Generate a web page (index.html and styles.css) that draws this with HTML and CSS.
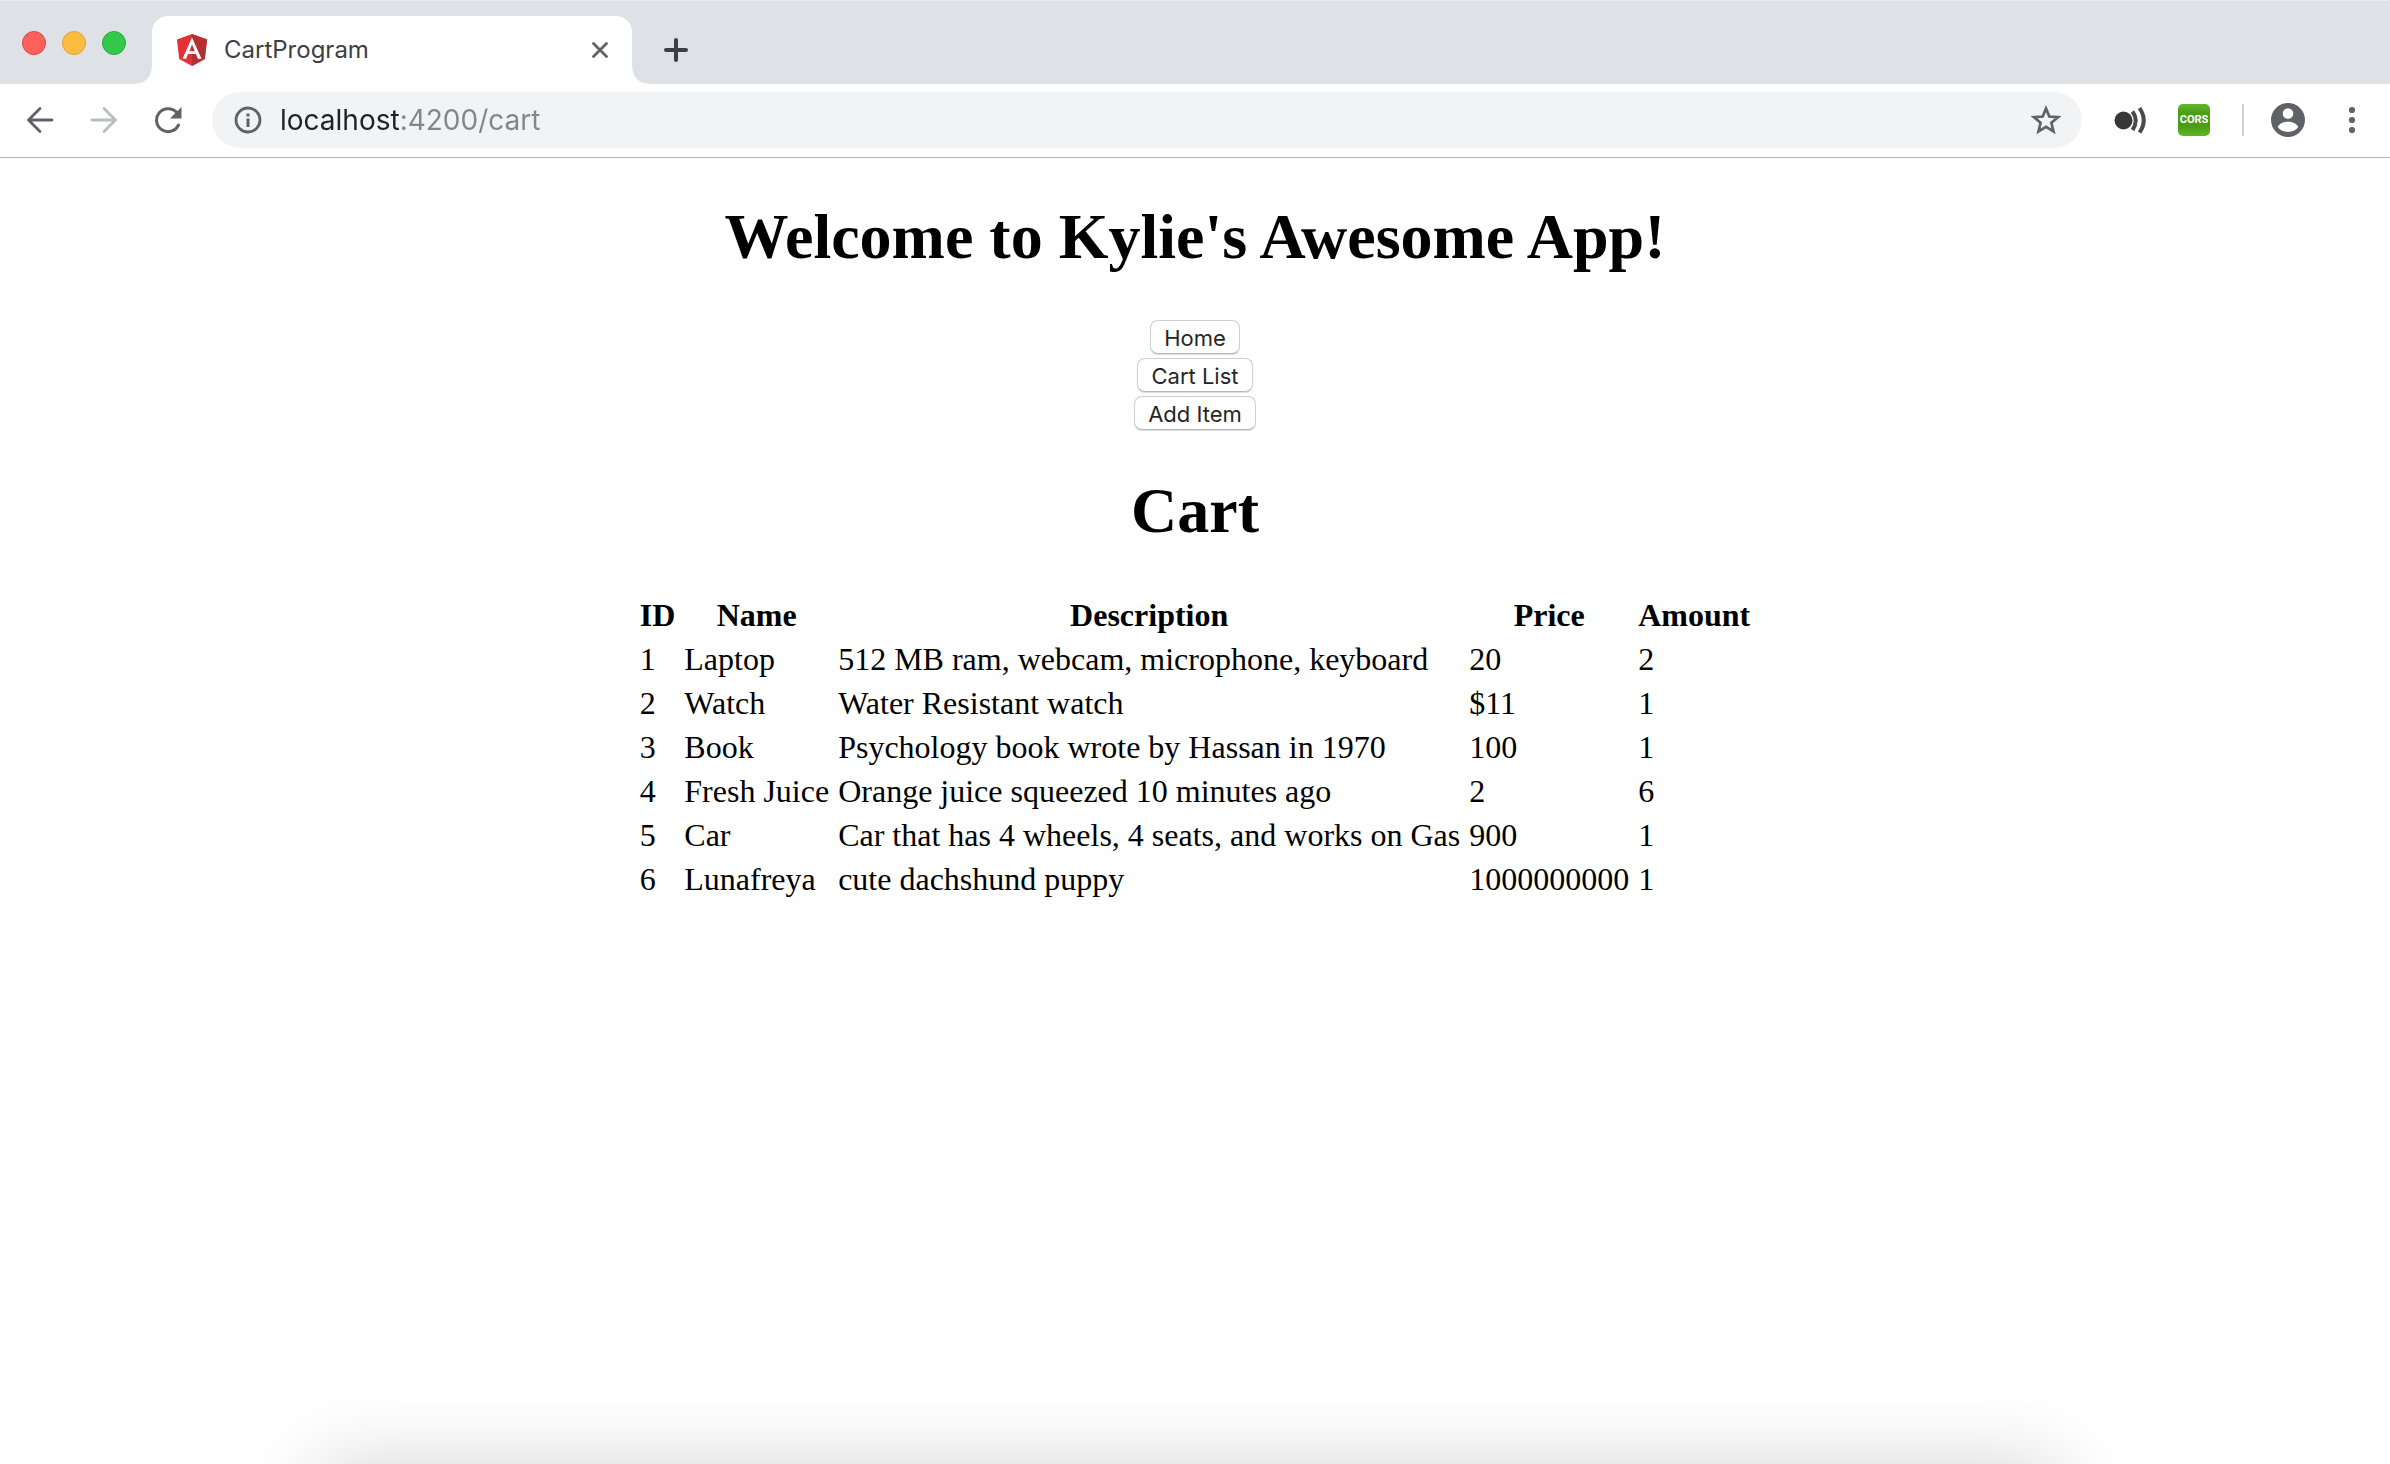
FILE: index.html
```html
<!DOCTYPE html>
<html lang="en">
<head>
<meta charset="utf-8">
<title>CartProgram</title>
<link rel="stylesheet" href="styles.css">
</head>
<body>
<div class="window">
  <header class="chrome">
    <div class="tab-strip">
      <div class="lights">
        <button class="light light-close" type="button" aria-label="Close window"></button>
        <button class="light light-min" type="button" aria-label="Minimize window"></button>
        <button class="light light-max" type="button" aria-label="Zoom window"></button>
      </div>
      <div class="tab">
        <svg class="favicon" width="32" height="32" viewBox="0 0 250 250" aria-hidden="true">
          <path fill="#e23237" d="M125 0 7 42l18 154 100 54 100-54 18-154z"/>
          <path fill="#b52e31" d="M125 0v250l100-54 18-154z"/>
          <path fill="#fff" d="M125 28 51 194h28l15-37h62l15 37h28zm22 106h-43l21-52z"/>
        </svg>
        <span class="tab-title">CartProgram</span>
        <button class="icon-button tab-close" type="button" aria-label="Close tab">
          <svg width="16" height="16" viewBox="0 0 16 16"><path d="M1.500 1.500 14.500 14.500M14.500 1.500 1.500 14.500" fill="none" stroke="#5f6368" stroke-width="2.800" stroke-linecap="round"/></svg>
        </button>
      </div>
      <button class="icon-button new-tab" type="button" aria-label="New tab">
        <svg width="24" height="24" viewBox="0 0 24 24"><path d="M12 2v20M2 12h20" fill="none" stroke="#3c4043" stroke-width="4" stroke-linecap="round"/></svg>
      </button>
    </div>
    <div class="toolbar">
      <nav class="tool-group" aria-label="History">
        <button class="icon-button" type="button" aria-label="Back">
          <svg width="28" height="28" viewBox="0 0 28 28"><path d="M26 14H3M14 2.500 2.500 14 14 25.500" fill="none" stroke="#5f6368" stroke-width="2.800" stroke-linecap="round" stroke-linejoin="round"/></svg>
        </button>
        <button class="icon-button" type="button" aria-label="Forward" disabled>
          <svg width="28" height="28" viewBox="0 0 28 28"><path d="M2 14h23M14 2.500 25.500 14 14 25.500" fill="none" stroke="#babcbe" stroke-width="2.800" stroke-linecap="round" stroke-linejoin="round"/></svg>
        </button>
        <button class="icon-button" type="button" aria-label="Reload">
          <svg width="28" height="28" viewBox="0 0 28 28"><path d="M24.500 19A11.500 11.500 0 1 1 22.500 6.300" fill="none" stroke="#5f6368" stroke-width="3" stroke-linecap="round"/><path d="M27.500 1v11.500H16z" fill="#5f6368"/></svg>
        </button>
      </nav>
      <div class="omnibox">
        <svg width="28" height="28" viewBox="0 0 28 28" aria-hidden="true"><circle cx="14" cy="14" r="12" fill="none" stroke="#5f6368" stroke-width="2.800"/><path d="M12.500 7.500h3v3h-3zM12.500 12.500h3v8.500h-3z" fill="#5f6368"/></svg>
        <input class="address" type="text" aria-label="Address" value="localhost:4200/cart">
        <button class="icon-button" type="button" aria-label="Bookmark this page">
          <svg width="30" height="30" viewBox="0 0 30 30"><path d="M15 3.500 18.300 11.500 27 12.200 20.400 17.800 22.500 26.400 15 21.800 7.500 26.400 9.600 17.800 3 12.200 11.700 11.500z" fill="none" stroke="#5f6368" stroke-width="2.700"/></svg>
        </button>
      </div>
      <div class="tool-group">
        <button class="icon-button" type="button" aria-label="Sound extension">
          <svg width="32" height="32" viewBox="0 0 32 32"><circle cx="9.500" cy="16.500" r="9" fill="#373737"/><path d="M18.500 7.500q6.500 9 0 18.500M25.500 4q8.500 12.500 0 24.500" fill="none" stroke="#4a4a4a" stroke-width="4"/></svg>
        </button>
        <button class="icon-button cors" type="button" aria-label="CORS extension"><span class="cors-badge">CORS</span></button>
        <span class="divider"></span>
        <button class="icon-button" type="button" aria-label="Profile">
          <svg width="34" height="34" viewBox="0 0 34 34"><circle cx="17" cy="17" r="17" fill="#5f6368"/><circle cx="17" cy="10.500" r="5.300" fill="#fff"/><path d="M6.800 24c3-7 17.400-7 20.400 0-4.500 6.500-16 6.500-20.400 0z" fill="#fff"/></svg>
        </button>
        <button class="icon-button" type="button" aria-label="Menu">
          <svg width="28" height="28" viewBox="0 0 28 28" fill="#5f6368"><circle cx="14" cy="4" r="3.100"/><circle cx="14" cy="14" r="3.100"/><circle cx="14" cy="24" r="3.100"/></svg>
        </button>
      </div>
    </div>
  </header>

  <main class="page">
    <h1 class="heading">Welcome to Kylie's Awesome App!</h1>
    <nav class="menu">
      <button class="menu-button" type="button">Home</button>
      <button class="menu-button" type="button">Cart List</button>
      <button class="menu-button" type="button">Add Item</button>
    </nav>
    <h1 class="heading">Cart</h1>
    <table class="cart">
      <thead>
        <tr><th>ID</th><th>Name</th><th>Description</th><th>Price</th><th>Amount</th></tr>
      </thead>
      <tbody>
        <tr><td>1</td><td>Laptop</td><td>512 MB ram, webcam, microphone, keyboard</td><td>20</td><td>2</td></tr>
        <tr><td>2</td><td>Watch</td><td>Water Resistant watch</td><td>$11</td><td>1</td></tr>
        <tr><td>3</td><td>Book</td><td>Psychology book wrote by Hassan in 1970</td><td>100</td><td>1</td></tr>
        <tr><td>4</td><td>Fresh Juice</td><td>Orange juice squeezed 10 minutes ago</td><td>2</td><td>6</td></tr>
        <tr><td>5</td><td>Car</td><td>Car that has 4 wheels, 4 seats, and works on Gas</td><td>900</td><td>1</td></tr>
        <tr><td>6</td><td>Lunafreya</td><td>cute dachshund puppy</td><td>1000000000</td><td>1</td></tr>
      </tbody>
    </table>
  </main>
  <div class="dock-shadow"></div>
</div>
</body>
</html>
```
FILE: styles.css
```css
* { box-sizing: border-box; }

body {
  margin: 0;
  background: #fff;
  color: #000;
  font-family: "Liberation Serif", "Times New Roman", serif;
  font-size: 32px;
  line-height: 36px;
}

button, input { font-family: Inter, sans-serif; }

svg { display: block; }

.window {
  min-height: 100vh;
  overflow: hidden;
}

.tab-strip {
  display: flex;
  align-items: flex-start;
  height: 84px;
  padding-top: 15px;
  background: #dee1e6;
  border-top: 1px solid #ebedf0;
}

.lights {
  display: flex;
  gap: 16px;
  width: 152px;
  padding: 15px 0 0 22px;
}

.light {
  width: 24px;
  height: 24px;
  padding: 0;
  border: 1px solid;
  border-radius: 50%;
}
.light-close { background: #fc605c; border-color: #e2463f; }
.light-min { background: #fdbc40; border-color: #e0a03a; }
.light-max { background: #34c84a; border-color: #27aa35; }

.tab {
  position: relative;
  display: flex;
  align-items: center;
  width: 480px;
  height: 68px;
  padding: 0 16px 0 24px;
  background: #fff;
  border-radius: 16px 16px 0 0;
}

/* Flared feet that join the tab to the toolbar */
.tab::before,
.tab::after {
  content: "";
  position: absolute;
  bottom: 0;
  width: 16px;
  height: 16px;
}
.tab::before { right: 100%; background: radial-gradient(circle at 0 0, transparent 15px, #fff 16px); }
.tab::after { left: 100%; background: radial-gradient(circle at 100% 0, transparent 15px, #fff 16px); }

.tab-title {
  flex: 1;
  padding-left: 16px;
  color: #3c4043;
  font-family: Inter, sans-serif;
  font-size: 24px;
  line-height: 32px;
}

.icon-button {
  display: flex;
  flex: none;
  align-items: center;
  justify-content: center;
  width: 48px;
  height: 48px;
  padding: 0;
  background: none;
  border: 0;
}

.tab-close { width: 32px; }
.new-tab { margin: 10px 0 0 20px; }

.toolbar {
  display: flex;
  align-items: center;
  gap: 20px;
  height: 74px;
  padding: 0 14px 2px 16px;
  border-bottom: 1px solid #b3b4b6;
}

.tool-group {
  display: flex;
  align-items: center;
  gap: 16px;
}

.omnibox {
  display: flex;
  flex: 1;
  align-items: center;
  height: 56px;
  margin-right: 4px;
  padding: 0 12px 0 22px;
  background: #f1f3f4;
  border-radius: 28px;
}

.address {
  flex: 1;
  min-width: 0;
  height: 40px;
  margin-left: 18px;
  padding: 0;
  border: 0;
  outline: 0;
  font-size: 28px;
  line-height: 40px;
  /* Host in dark ink, the rest of the address in grey */
  color: transparent;
  background: linear-gradient(90deg, #202124 120px, #80868b 120px);
  -webkit-background-clip: text;
  background-clip: text;
}

.cors-badge {
  width: 32px;
  height: 32px;
  background: linear-gradient(#61b52b, #4b9c17 30%, #4b9c17 70%, #5cb821);
  border-radius: 5px;
  color: #fff;
  font-family: Roboto, sans-serif;
  font-size: 11px;
  font-weight: 700;
  line-height: 32px;
  text-align: center;
}

.divider {
  width: 2px;
  height: 32px;
  margin: 0 4px 0 8px;
  background: #cfd1d4;
}

.page { padding: 0 16px; }

.heading {
  margin: 0;
  padding: 42px 0 43px;
  font-size: 64px;
  font-weight: 700;
  line-height: 74px;
  text-align: center;
}

.menu {
  display: flex;
  flex-direction: column;
  align-items: center;
  gap: 4px;
  padding: 3px 0 2px;
}

.menu-button {
  height: 34px;
  padding: 1px 13px 0;
  background: #fff;
  border: 1px solid #cfcfcf;
  border-bottom-color: #b8b8b8;
  border-radius: 8px;
  box-shadow: 0 1px 1px rgba(0, 0, 0, 0.15);
  color: #262626;
  font-size: 22px;
  line-height: 32px;
}

.cart {
  margin: 0 auto;
  border-spacing: 5px 4px;
}
.cart th, .cart td { padding: 2px; }
.cart td { text-align: left; }

/* Shadow cast by the dock that sits below the window */
.dock-shadow {
  position: fixed;
  right: 330px;
  bottom: -200px;
  left: 318px;
  height: 200px;
  box-shadow: 0 0 80px rgba(0, 0, 0, 0.17);
}
```
